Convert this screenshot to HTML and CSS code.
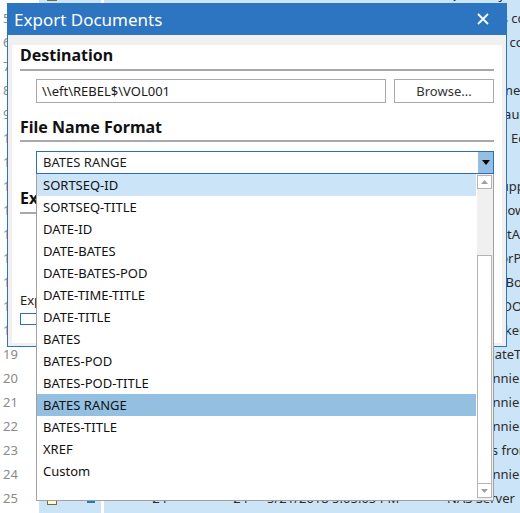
FILE: index.html
```html
<!DOCTYPE html>
<html lang="en">
<head>
    <meta charset="UTF-8">
    <title>Export Documents</title>
    <link rel="stylesheet" href="styles.css">
</head>
<body>
    <!-- document grid behind the dialog -->
    <div class="grid">
        <div class="row"><span class="num">4</span><span class="icons"><i class="doc"></i><i class="tag"></i></span><span class="cells"><span class="c-id">3</span><span class="c-pg">3</span><span class="c-date">5/21/2018 5:01:12 PM</span><span class="c-name">Quarterly Summary</span></span></div>
        <div class="row"><span class="num">5</span><span class="icons"><i class="doc"></i><i class="tag"></i></span><span class="cells"><span class="c-id">4</span><span class="c-pg">4</span><span class="c-date">5/21/2018 5:01:20 PM</span><span class="c-name">Old Notes cc</span></span></div>
        <div class="row"><span class="num">6</span><span class="icons"><i class="doc"></i><i class="tag"></i></span><span class="cells"><span class="c-id">5</span><span class="c-pg">5</span><span class="c-date">5/21/2018 5:01:34 PM</span><span class="c-name">Amended contract</span></span></div>
        <div class="row"><span class="num">7</span><span class="icons"><i class="doc"></i><i class="tag"></i></span><span class="cells"><span class="c-id">6</span><span class="c-pg">6</span><span class="c-date">5/21/2018 5:01:40 PM</span><span class="c-name"></span></span></div>
        <div class="row"><span class="num">8</span><span class="icons"><i class="doc"></i><i class="tag"></i></span><span class="cells"><span class="c-id">7</span><span class="c-pg">7</span><span class="c-date">5/21/2018 5:01:52 PM</span><span class="c-name">Monthly meeting</span></span></div>
        <div class="row"><span class="num">9</span><span class="icons"><i class="doc"></i><i class="tag"></i></span><span class="cells"><span class="c-id">8</span><span class="c-pg">8</span><span class="c-date">5/21/2018 5:02:03 PM</span><span class="c-name">Financial audit</span></span></div>
        <div class="row"><span class="num">10</span><span class="icons"><i class="doc"></i><i class="tag"></i></span><span class="cells"><span class="c-id">9</span><span class="c-pg">9</span><span class="c-date">5/21/2018 5:02:11 PM</span><span class="c-name">Report on Ecommerce</span></span></div>
        <div class="row"><span class="num">11</span><span class="icons"><i class="doc"></i><i class="tag"></i></span><span class="cells"><span class="c-id">10</span><span class="c-pg">10</span><span class="c-date">5/21/2018 5:02:19 PM</span><span class="c-name"></span></span></div>
        <div class="row"><span class="num">12</span><span class="icons"><i class="doc"></i><i class="tag"></i></span><span class="cells"><span class="c-id">11</span><span class="c-pg">11</span><span class="c-date">5/21/2018 5:02:27 PM</span><span class="c-name">Vendor supplies</span></span></div>
        <div class="row"><span class="num">13</span><span class="icons"><i class="doc"></i><i class="tag"></i></span><span class="cells"><span class="c-id">12</span><span class="c-pg">12</span><span class="c-date">5/21/2018 5:02:35 PM</span><span class="c-name">Status follow-up</span></span></div>
        <div class="row"><span class="num">14</span><span class="icons"><i class="doc"></i><i class="tag"></i></span><span class="cells"><span class="c-id">13</span><span class="c-pg">13</span><span class="c-date">5/21/2018 5:02:44 PM</span><span class="c-name">Config GetAll</span></span></div>
        <div class="row"><span class="num">15</span><span class="icons"><i class="doc"></i><i class="tag"></i></span><span class="cells"><span class="c-id">14</span><span class="c-pg">14</span><span class="c-date">5/21/2018 5:02:51 PM</span><span class="c-name">Re: VendorPay</span></span></div>
        <div class="row"><span class="num">16</span><span class="icons"><i class="doc"></i><i class="tag"></i></span><span class="cells"><span class="c-id">15</span><span class="c-pg">15</span><span class="c-date">5/21/2018 5:03:02 PM</span><span class="c-name">Memo to Board</span></span></div>
        <div class="row"><span class="num">17</span><span class="icons"><i class="doc"></i><i class="tag"></i></span><span class="cells"><span class="c-id">16</span><span class="c-pg">16</span><span class="c-date">5/21/2018 5:03:15 PM</span><span class="c-name">Scanned DOC</span></span></div>
        <div class="row"><span class="num">18</span><span class="icons"><i class="doc"></i><i class="tag"></i></span><span class="cells"><span class="c-id">17</span><span class="c-pg">17</span><span class="c-date">5/21/2018 5:03:24 PM</span><span class="c-name">Email broker</span></span></div>
        <div class="row"><span class="num">19</span><span class="icons"><i class="doc"></i><i class="tag"></i></span><span class="cells"><span class="c-id">18</span><span class="c-pg">18</span><span class="c-date">5/21/2018 5:03:40 PM</span><span class="c-name">Re: UpdateTool</span></span></div>
        <div class="row"><span class="num">20</span><span class="icons"><i class="doc"></i><i class="tag"></i></span><span class="cells"><span class="c-id">19</span><span class="c-pg">19</span><span class="c-date">5/21/2018 5:03:52 PM</span><span class="c-name">Mail Bonnier</span></span></div>
        <div class="row"><span class="num">21</span><span class="icons"><i class="doc"></i><i class="tag"></i></span><span class="cells"><span class="c-id">20</span><span class="c-pg">20</span><span class="c-date">5/21/2018 5:04:06 PM</span><span class="c-name">Mail Bonnier</span></span></div>
        <div class="row"><span class="num">22</span><span class="icons"><i class="doc"></i><i class="tag"></i></span><span class="cells"><span class="c-id">21</span><span class="c-pg">21</span><span class="c-date">5/21/2018 5:04:18 PM</span><span class="c-name">Mail Bonnier</span></span></div>
        <div class="row"><span class="num">23</span><span class="icons"><i class="doc"></i><i class="tag"></i></span><span class="cells"><span class="c-id">22</span><span class="c-pg">22</span><span class="c-date">5/21/2018 5:04:31 PM</span><span class="c-name">Updates from</span></span></div>
        <div class="row"><span class="num">24</span><span class="icons"><i class="doc"></i><i class="tag"></i></span><span class="cells"><span class="c-id">23</span><span class="c-pg">23</span><span class="c-date">5/21/2018 5:04:47 PM</span><span class="c-name">Mail Bonnier</span></span></div>
        <div class="row"><span class="num">25</span><span class="icons"><i class="doc"></i><i class="tag"></i></span><span class="cells"><span class="c-id">24</span><span class="c-pg">24</span><span class="c-date">5/21/2018 5:05:05 PM</span><span class="c-name">NAS Server</span></span></div>
        <div class="row"><span class="num">26</span><span class="icons"><i class="doc"></i><i class="tag"></i></span><span class="cells"><span class="c-id">25</span><span class="c-pg">25</span><span class="c-date">5/21/2018 5:05:19 PM</span><span class="c-name">NAS Server</span></span></div>
    </div>

    <div class="dialog">
        <div class="titlebar">
            <span class="title">Export Documents</span>
            <svg class="close" width="12" height="12" viewBox="0 0 12 12"><path d="M1 1L11 11M11 1L1 11" stroke="#fff" stroke-width="1.8" fill="none"/></svg>
        </div>
        <div class="body">
            <div class="panel">
                <h2 class="first">Destination</h2>
                <div class="rule"></div>
                <div class="field-row">
                    <div class="textbox">\\eft\REBEL$\VOL001</div>
                    <div class="button">Browse...</div>
                </div>

                <h2>File Name Format</h2>
                <div class="rule tight"></div>
                <div class="select-row">
                    <div class="select">
                        <span class="value">BATES RANGE</span>
                        <span class="arrow"><svg width="8" height="5" viewBox="0 0 8 5"><path d="M0 0H8L4 5Z" fill="#000"/></svg></span>
                        <div class="listbox">
                            <ul class="options">
                                <li class="hover">SORTSEQ-ID</li>
                                <li>SORTSEQ-TITLE</li>
                                <li>DATE-ID</li>
                                <li>DATE-BATES</li>
                                <li>DATE-BATES-POD</li>
                                <li>DATE-TIME-TITLE</li>
                                <li>DATE-TITLE</li>
                                <li>BATES</li>
                                <li>BATES-POD</li>
                                <li>BATES-POD-TITLE</li>
                                <li class="selected">BATES RANGE</li>
                                <li>BATES-TITLE</li>
                                <li>XREF</li>
                                <li>Custom</li>
                            </ul>
                            <div class="scrollbar">
                                <div class="sb-btn"><svg width="7" height="4" viewBox="0 0 7 4"><path d="M0 4H7L3.5 0Z" fill="#a0a0a0"/></svg></div>
                                <div class="sb-track"></div>
                                <div class="sb-thumb"></div>
                                <div class="sb-btn down"><svg width="7" height="4" viewBox="0 0 7 4"><path d="M0 0H7L3.5 4Z" fill="#a0a0a0"/></svg></div>
                            </div>
                        </div>
                    </div>
                </div>

                <h2>Export Settings</h2>
                <div class="rule"></div>
                <div class="settings">
                    <div class="opt"><span class="check"></span>Include native files</div>
                    <div class="opt"><span class="check"></span>Include images</div>
                    <div class="opt"><span class="check"></span>Include text</div>
                </div>
                <div class="label">Export Progress</div>
                <div class="progress"></div>
            </div>
        </div>
    </div>
</body>
</html>
```

FILE: styles.css
```css
html, body {
    margin: 0;
    padding: 0;
}

body {
    width: 520px;
    height: 513px;
    overflow: hidden;
    position: relative;
    background: #fff;
    font-family: 'Noto Sans', 'Liberation Sans', sans-serif;
    font-size: 13px;
    color: #1a1a1a;
}

/* background grid */
.grid {
    margin-top: -18px;
}

.row {
    display: flex;
    height: 24px;
    line-height: 24px;
}

.row .num {
    width: 36px;
    padding-left: 3px;
    color: #8a8a8a;
    background: #fff;
    flex-shrink: 0;
}

.row .icons {
    width: 62px;
    margin-right: 3px;
    background: #cce4f7;
    display: flex;
    align-items: center;
    flex-shrink: 0;
}

.row .doc {
    width: 8px;
    height: 11px;
    margin-left: 8px;
    background: #fff7d6;
    border: 1px solid #7a6a3a;
}

.row .tag {
    width: 8px;
    height: 10px;
    margin-left: 30px;
    background: #2b74c7;
}

.row .cells {
    flex: 1;
    min-width: 0;
    display: flex;
    background: #cce4f7;
    color: #2b2b2b;
    white-space: nowrap;
    overflow: hidden;
}

.c-id {
    width: 63px;
    flex-shrink: 0;
    text-align: right;
}

.c-pg {
    width: 81px;
    flex-shrink: 0;
    text-align: right;
}

.c-date {
    width: 180px;
    flex-shrink: 0;
    margin-left: 19px;
}

.c-name {
    flex: 1;
    min-width: 0;
}

/* dialog */
.dialog {
    position: absolute;
    left: 7px;
    top: 3px;
    width: 500px;
    box-sizing: border-box;
    border: 1px solid #2e75c1;
    border-top: 0;
    background: #f0f0f0;
}

.titlebar {
    height: 32px;
    background: #2e75c1;
    color: #fff;
    display: flex;
    align-items: center;
    justify-content: space-between;
    padding: 0 17px 0 6px;
}

.title {
    font-size: 17px;
}

.body {
    padding: 4px 4px 3px 4px;
}

.panel {
    background: #fff;
    height: 298px;
    padding: 0 8px;
}

.panel h2 {
    margin: 14px 0 0;
    font-size: 16px;
    line-height: 20px;
    font-weight: bold;
    color: #111;
}

.panel h2.first {
    margin-top: 6px;
}

.rule {
    height: 2px;
    margin-top: 4px;
    background: #a9a9a9;
}

.rule.tight {
    margin-top: 3px;
}

.field-row {
    display: flex;
    margin-top: 8px;
    padding-left: 16px;
    gap: 8px;
}

.textbox {
    width: 350px;
    height: 24px;
    box-sizing: border-box;
    border: 1px solid #a9a9a9;
    padding-left: 5px;
    line-height: 22px;
}

.button {
    width: 100px;
    height: 24px;
    box-sizing: border-box;
    border: 1px solid #a9a9a9;
    background: #fff;
    color: #333;
    text-align: center;
    line-height: 22px;
}

.select-row {
    margin-top: 9px;
    padding-left: 16px;
}

.select {
    position: relative;
    height: 23px;
    box-sizing: border-box;
    border: 1px solid #2a6fbf;
    display: flex;
}

.select .value {
    flex: 1;
    padding-left: 6px;
    line-height: 21px;
}

.select .arrow {
    width: 15px;
    background: #94bfe3;
    display: flex;
    align-items: center;
    justify-content: center;
}

/* open dropdown */
.listbox {
    position: absolute;
    top: 22px;
    left: -1px;
    right: -1px;
    height: 327px;
    box-sizing: border-box;
    border: 1px solid #a0a0a0;
    border-top: 0;
    background: #fff;
    display: flex;
    z-index: 2;
}

.options {
    flex: 1;
    list-style: none;
    margin: 0;
    padding: 0;
}

.options li {
    height: 22px;
    line-height: 22px;
    padding-left: 6px;
    margin-right: 1px;
    color: #111;
}

.options li.hover {
    background: #cce4f7;
}

.options li.selected {
    background: #93c0e1;
}

.scrollbar {
    width: 16px;
    background: #f0f0f0;
    display: flex;
    flex-direction: column;
    padding: 1px 1px 2px 0;
    box-sizing: border-box;
}

.sb-btn {
    height: 14px;
    box-sizing: border-box;
    border: 1px solid #b4b4b4;
    background: #fff;
    display: flex;
    align-items: center;
    justify-content: center;
}

.sb-btn.down {
    border-top: 0;
}

.sb-track {
    height: 66px;
}

.sb-thumb {
    flex: 1;
    box-sizing: border-box;
    border: 1px solid #b4b4b4;
    background: #fff;
}

.settings {
    margin-top: 10px;
    padding-left: 16px;
}

.opt {
    height: 22px;
    line-height: 22px;
    display: flex;
    align-items: center;
    gap: 6px;
}

.check {
    width: 11px;
    height: 11px;
    border: 1px solid #888;
}

.label {
    margin-top: 1px;
    line-height: 18px;
}

.progress {
    margin-top: 4px;
    height: 12px;
    box-sizing: border-box;
    border: 1px solid #2a6fbf;
}
```
